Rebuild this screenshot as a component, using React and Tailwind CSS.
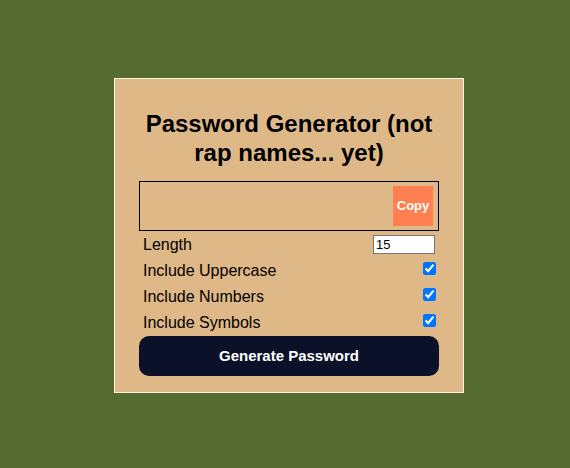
import { useState } from 'react'

const OPTIONS = [
  { key: 'upper', label: 'Include Uppercase' },
  { key: 'numbers', label: 'Include Numbers' },
  { key: 'symbols', label: 'Include Symbols' },
]

export default function App() {
  const [length, setLength] = useState(15)
  const [opts, setOpts] = useState({ upper: true, numbers: true, symbols: true })

  return (
    <div className="w-full h-[468px] bg-[#556b2f] pt-[78px] pl-[114px] font-['Liberation_Sans',Arial,sans-serif] text-black">
      <div className="w-[350px] border border-[#fdf6df] bg-[#deb887] px-6 pb-4">
        {/* Title */}
        <h2 className="pt-[30px] mb-[14px] text-center text-[24px] leading-[29px] font-bold">
          Password Generator (not rap names... yet)
        </h2>

        {/* Result */}
        <div className="h-[50px] border border-black flex items-center justify-end pr-[5px]">
          <button className="w-10 h-10 bg-[#ff7f50] text-white text-[13px] font-bold">
            Copy
          </button>
        </div>

        {/* Settings */}
        <div className="h-[26px] flex items-center justify-between pl-1 text-[16px]">
          <span className="pt-px">Length</span>
          <input
            type="number"
            value={length}
            onChange={e => setLength(e.target.value)}
            className="w-[62px] h-[19px] mr-[4px] border border-[#767676] bg-white px-[2px] text-[13px] leading-none [appearance:textfield]"
          />
        </div>
        {OPTIONS.map(o => (
          <div key={o.key} className="h-[26px] flex items-center justify-between pl-1 text-[16px]">
            <span className="pt-px">{o.label}</span>
            <input
              type="checkbox"
              checked={opts[o.key]}
              onChange={() => setOpts(s => ({ ...s, [o.key]: !s[o.key] }))}
              className="w-[13px] h-[13px] m-0 mr-[3px] mb-[3px]"
            />
          </div>
        ))}

        <button className="mt-px w-full h-10 rounded-[10px] bg-[#0a1128] text-white text-[15px] font-bold">
          Generate Password
        </button>
      </div>
    </div>
  )
}
